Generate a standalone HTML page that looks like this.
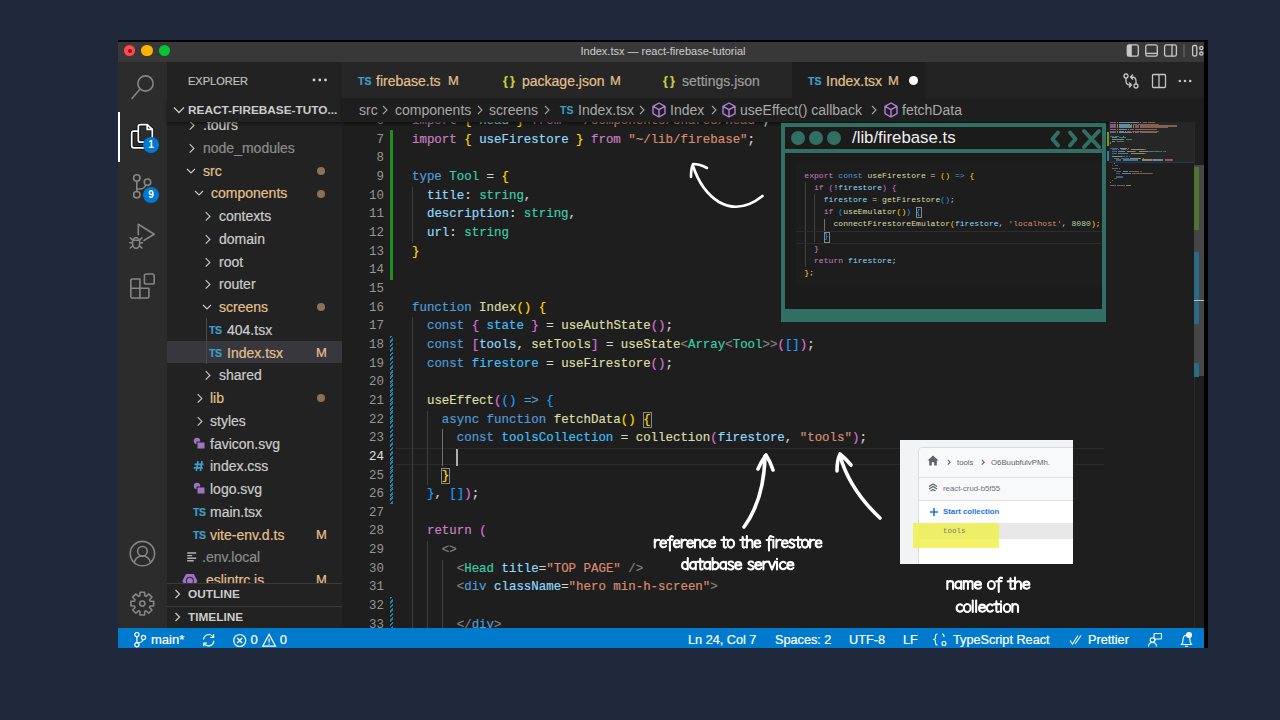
<!DOCTYPE html>
<html><head><meta charset="utf-8"><style>
*{margin:0;padding:0;box-sizing:border-box}
html,body{width:1280px;height:720px;overflow:hidden;background:#1f293b;font-family:"Liberation Sans",sans-serif}
.a{position:absolute}
.mono{font-family:"Liberation Mono",monospace}
.badge{position:absolute;width:16px;height:16px;border-radius:8px;background:#0078d4;color:#fff;font-size:10px;font-weight:bold;text-align:center;line-height:16px}
.row{position:absolute;left:167px;width:175px;height:22.75px;line-height:22.75px;font-size:14px;color:#cccccc;white-space:nowrap;-webkit-text-stroke:0.2px currentColor}
.row .t{position:absolute;top:0}
.chev{position:absolute;top:0}
.mod{color:#e2c08d}
.ign{color:#8c8c8c}
.dot{position:absolute;left:150px;top:7.4px;width:8px;height:8px;border-radius:4px;background:#8d7058}
.M{position:absolute;left:149px;top:0;color:#e2c08d;font-size:13px}
.ts{position:absolute;top:0;color:#3d9fc9;font-size:10px;font-weight:bold;letter-spacing:-0.3px}
.tab{position:absolute;top:62px;height:36px;line-height:38.5px;font-size:14px;white-space:nowrap;background:#262626;-webkit-text-stroke:0.2px currentColor}
.code{position:absolute;left:412px;font-family:"Liberation Mono",monospace;font-size:12.43px;line-height:18.65px;white-space:pre;color:#d4d4d4;-webkit-text-stroke:0.2px currentColor}
.ln{position:absolute;left:344px;width:40px;text-align:right;font-family:"Liberation Mono",monospace;font-size:12.43px;line-height:18.65px;color:#858585}
.k{color:#c97fc2}.s{color:#4f9bd8}.v{color:#8ed8fb}.c{color:#3fbff8}.f{color:#dcdca6}.t2{color:#3acca8}.str{color:#d88b6e}.p{color:#d4d4d4}.g{color:#808080}
.b1{color:#ffd700}.b2{color:#da70d6}.b3{color:#179fff}
.sb{position:absolute;top:628px;height:20px;line-height:20px;font-size:13px;color:#fff;white-space:nowrap;-webkit-text-stroke:0.2px #fff}
.hand{position:absolute;color:#fff;font-size:15.3px;white-space:nowrap;text-align:center;-webkit-text-stroke:0.45px #fff}
.n{color:#b5cea8}</style></head><body>
<div class="a" style="left:118px;top:40px;width:1090px;height:608px;background:#000"></div>
<div class="a" style="left:118px;top:42px;width:1086px;height:20px;background:#383838"></div>
<div class="a" style="left:124.05px;top:44.95px;width:11.3px;height:11.3px;border-radius:50%;background:#ff4b50"></div>
<div class="a" style="left:127.6px;top:48.5px;width:4.2px;height:4.2px;border-radius:50%;background:#9a0d10"></div>
<div class="a" style="left:141.25px;top:44.95px;width:11.3px;height:11.3px;border-radius:50%;background:#ffb202"></div>
<div class="a" style="left:158.55px;top:44.95px;width:11.3px;height:11.3px;border-radius:50%;background:#05c534"></div>
<div class="a" style="left:560px;top:43px;width:206px;text-align:center;font-size:11px;line-height:16px;color:#cfcfcf">Index.tsx — react-firebase-tutorial</div>
<svg class="a" style="left:1120px;top:42px" width="84" height="20" viewBox="0 0 84 20" fill="none" stroke="#c8c8c8" stroke-width="1.3">
<rect x="7.3" y="2.9" width="11" height="11.3" rx="1.8"/><rect x="7.3" y="2.9" width="4.5" height="11.3" fill="#c8c8c8" stroke="none"/>
<rect x="25.8" y="2.9" width="11.5" height="11.3" rx="1.8"/><line x1="25.8" y1="11.4" x2="37.3" y2="11.4"/>
<rect x="44.6" y="2.9" width="11.8" height="11.3" rx="1.8"/><line x1="52" y1="2.9" x2="52" y2="14.2"/>
<line x1="64" y1="2.5" x2="64" y2="15" stroke="#666"/>
<rect x="72.6" y="3.5" width="4.2" height="10.5" rx="1.5"/><circle cx="81.3" cy="6" r="1.6"/><circle cx="81.3" cy="11.6" r="1.6"/>
</svg>
<div class="a" style="left:118px;top:62px;width:49px;height:566px;background:#2c2c2c"></div>
<div class="a" style="left:118px;top:112px;width:2px;height:50px;background:#fff"></div>
<svg class="a" style="left:118px;top:62px" width="49" height="566" viewBox="0 0 49 566" fill="none" stroke="#858585" stroke-width="1.6" stroke-linecap="round" stroke-linejoin="round">
<circle cx="27.5" cy="21.5" r="7.6"/><line x1="22" y1="27" x2="14" y2="36.5"/>
<g stroke="#000" stroke-width="3.6" opacity="0.6">
<path d="M22.3 62.7 h7 l5 4.7 v10.8 a2 2 0 0 1 -2 2 h-10 a2 2 0 0 1 -2 -2 v-13.5 a2 2 0 0 1 2 -2z"/>
<path d="M20.3 69.1 h-4.6 a2 2 0 0 0 -2 2 v12.7 a2 2 0 0 0 2 2 h12 a2 2 0 0 0 2 -2 v-3.6"/>
</g>
<g stroke="#fff" stroke-width="1.7">
<path d="M22.3 62.7 h7 l5 4.7 v10.8 a2 2 0 0 1 -2 2 h-10 a2 2 0 0 1 -2 -2 v-13.5 a2 2 0 0 1 2 -2z"/>
<path d="M29.2 62.7 v4.7 h5"/>
<path d="M20.3 69.1 h-4.6 a2 2 0 0 0 -2 2 v12.7 a2 2 0 0 0 2 2 h12 a2 2 0 0 0 2 -2 v-3.6"/>
</g>
<circle cx="18.8" cy="116" r="3.2"/><circle cx="18.8" cy="132.7" r="3.2"/><circle cx="29.5" cy="120.2" r="3.2"/>
<line x1="18.8" y1="119.2" x2="18.8" y2="129.5"/><path d="M28 123 q-2 4 -6 4 h-3.2"/>
<path d="M20.3 172.7 V162.2 L36.2 172.2 L25.9 178.5"/>
<ellipse cx="18.1" cy="181" rx="3.6" ry="5.4"/>
<line x1="14.5" y1="178.3" x2="21.7" y2="178.3"/>
<path d="M12.3 175.8 l2.4 2.2 M23.9 175.8 l-2.4 2.2 M11.8 180.8 h2.6 M24.4 180.8 h-2.6 M12.3 186 l2.4 -2.2 M23.9 186 l-2.4 -2.2"/>
<path d="M14.3 217 h7.6 v9.2 h9 v8.3 a1.5 1.5 0 0 1 -1.5 1.5 h-15.1 a1.5 1.5 0 0 1 -1.5 -1.5 v-16 a1.5 1.5 0 0 1 1.5 -1.5z"/><path d="M12.8 226.2 h9.1 M21.9 226.2 v9.8"/>
<rect x="26.4" y="212" width="9.8" height="10" rx="1.8"/>
<circle cx="24.4" cy="491.6" r="12.2"/><circle cx="24.4" cy="489.3" r="4.8"/><path d="M16.2 500.5 q2 -6.5 8.2 -6.5 q6.2 0 8.2 6.5"/>
<circle cx="24.3" cy="541.6" r="2.6"/>
<path d="M21.88 533.77 L22.00 530.23 L26.60 530.23 L26.72 533.77 L28.13 534.35 L30.71 531.93 L33.97 535.19 L31.55 537.77 L32.13 539.18 L35.67 539.30 L35.67 543.90 L32.13 544.02 L31.55 545.43 L33.97 548.01 L30.71 551.27 L28.13 548.85 L26.72 549.43 L26.60 552.97 L22.00 552.97 L21.88 549.43 L20.47 548.85 L17.89 551.27 L14.63 548.01 L17.05 545.43 L16.47 544.02 L12.93 543.90 L12.93 539.30 L16.47 539.18 L17.05 537.77 L14.63 535.19 L17.89 531.93 L20.47 534.35z"/>
</svg>
<div class="badge" style="left:143px;top:137px">1</div>
<div class="badge" style="left:143px;top:187px">9</div>
<div class="a" style="left:167px;top:62px;width:175px;height:566px;background:#222222"></div>
<div class="a" style="left:188px;top:73px;font-size:11px;line-height:16px;color:#c0c0c0;-webkit-text-stroke:0.2px #c0c0c0">EXPLORER</div>
<svg class="a" style="left:308px;top:74px" width="24" height="12" viewBox="0 0 24 12"><circle cx="6" cy="6" r="1.4" fill="#d0d0d0"/><circle cx="11.8" cy="6" r="1.4" fill="#d0d0d0"/><circle cx="17.5" cy="6" r="1.4" fill="#d0d0d0"/></svg>
<div class="a" style="left:167px;top:340.6px;width:175px;height:22.75px;background:#37373d"></div>
<div class="a" style="left:206px;top:318px;width:1px;height:45.5px;background:#4a4a4a"></div>
<div class="row " style="top:114.10px"><svg class="chev" style="left:20px" width="10" height="22" viewBox="0 0 10 22"><path d="M2.7 7.2 l4.2 4.2 l-4.2 4.2" fill="none" stroke="#c5c5c5" stroke-width="1.2"/></svg><span class="t" style="left:36px">.tours</span></div>
<div class="row ign" style="top:136.85px"><svg class="chev" style="left:20px" width="10" height="22" viewBox="0 0 10 22"><path d="M2.7 7.2 l4.2 4.2 l-4.2 4.2" fill="none" stroke="#c5c5c5" stroke-width="1.2"/></svg><span class="t" style="left:36px">node_modules</span></div>
<div class="row mod" style="top:159.60px"><svg class="chev" style="left:18px" width="12" height="22" viewBox="0 0 12 22"><path d="M2 9 l4 4 l4 -4" fill="none" stroke="#c5c5c5" stroke-width="1.2"/></svg><span class="t" style="left:36px">src</span><span class="dot"></span></div>
<div class="row mod" style="top:182.35px"><svg class="chev" style="left:26px" width="12" height="22" viewBox="0 0 12 22"><path d="M2 9 l4 4 l4 -4" fill="none" stroke="#c5c5c5" stroke-width="1.2"/></svg><span class="t" style="left:44px">components</span><span class="dot"></span></div>
<div class="row " style="top:205.10px"><svg class="chev" style="left:36px" width="10" height="22" viewBox="0 0 10 22"><path d="M2.7 7.2 l4.2 4.2 l-4.2 4.2" fill="none" stroke="#c5c5c5" stroke-width="1.2"/></svg><span class="t" style="left:52px">contexts</span></div>
<div class="row " style="top:227.85px"><svg class="chev" style="left:36px" width="10" height="22" viewBox="0 0 10 22"><path d="M2.7 7.2 l4.2 4.2 l-4.2 4.2" fill="none" stroke="#c5c5c5" stroke-width="1.2"/></svg><span class="t" style="left:52px">domain</span></div>
<div class="row " style="top:250.60px"><svg class="chev" style="left:36px" width="10" height="22" viewBox="0 0 10 22"><path d="M2.7 7.2 l4.2 4.2 l-4.2 4.2" fill="none" stroke="#c5c5c5" stroke-width="1.2"/></svg><span class="t" style="left:52px">root</span></div>
<div class="row " style="top:273.35px"><svg class="chev" style="left:36px" width="10" height="22" viewBox="0 0 10 22"><path d="M2.7 7.2 l4.2 4.2 l-4.2 4.2" fill="none" stroke="#c5c5c5" stroke-width="1.2"/></svg><span class="t" style="left:52px">router</span></div>
<div class="row mod" style="top:296.10px"><svg class="chev" style="left:34px" width="12" height="22" viewBox="0 0 12 22"><path d="M2 9 l4 4 l4 -4" fill="none" stroke="#c5c5c5" stroke-width="1.2"/></svg><span class="t" style="left:52px">screens</span><span class="dot"></span></div>
<div class="row " style="top:318.85px"><span class="ts" style="left:42px;font-size:10.5px">TS</span><span class="t" style="left:60px">404.tsx</span></div>
<div class="row mod" style="top:341.60px"><span class="ts" style="left:42px;font-size:10.5px">TS</span><span class="t" style="left:60px">Index.tsx</span><span class="M">M</span></div>
<div class="row " style="top:364.35px"><svg class="chev" style="left:36px" width="10" height="22" viewBox="0 0 10 22"><path d="M2.7 7.2 l4.2 4.2 l-4.2 4.2" fill="none" stroke="#c5c5c5" stroke-width="1.2"/></svg><span class="t" style="left:52px">shared</span></div>
<div class="row mod" style="top:387.10px"><svg class="chev" style="left:28px" width="10" height="22" viewBox="0 0 10 22"><path d="M2.7 7.2 l4.2 4.2 l-4.2 4.2" fill="none" stroke="#c5c5c5" stroke-width="1.2"/></svg><span class="t" style="left:43px">lib</span><span class="dot"></span></div>
<div class="row " style="top:409.85px"><svg class="chev" style="left:28px" width="10" height="22" viewBox="0 0 10 22"><path d="M2.7 7.2 l4.2 4.2 l-4.2 4.2" fill="none" stroke="#c5c5c5" stroke-width="1.2"/></svg><span class="t" style="left:43px">styles</span></div>
<div class="row " style="top:432.60px"><svg class="chev" style="left:25px" width="16" height="22" viewBox="0 0 16 22"><circle cx="5" cy="8" r="3.2" fill="#a074c4"/><rect x="5" y="9" width="8" height="7" fill="#a074c4" stroke="#222" stroke-width="1"/></svg><span class="t" style="left:43px">favicon.svg</span></div>
<div class="row " style="top:455.35px"><svg class="chev" style="left:26px" width="12" height="22" viewBox="0 0 12 22"><path d="M5 6 l-1.6 10 M9 6 l-1.6 10 M1.5 9.3 h9 M0.8 12.8 h9" fill="none" stroke="#3d9fc9" stroke-width="1.7"/></svg><span class="t" style="left:43px">index.css</span></div>
<div class="row " style="top:478.10px"><svg class="chev" style="left:25px" width="16" height="22" viewBox="0 0 16 22"><circle cx="5" cy="8" r="3.2" fill="#a074c4"/><rect x="5" y="9" width="8" height="7" fill="#a074c4" stroke="#222" stroke-width="1"/></svg><span class="t" style="left:43px">logo.svg</span></div>
<div class="row " style="top:500.85px"><span class="ts" style="left:26px;font-size:10.5px">TS</span><span class="t" style="left:43px">main.tsx</span></div>
<div class="row mod" style="top:523.60px"><span class="ts" style="left:26px;font-size:10.5px">TS</span><span class="t" style="left:43px">vite-env.d.ts</span><span class="M">M</span></div>
<div class="row ign" style="top:546.35px"><svg class="chev" style="left:20px" width="12" height="22" viewBox="0 0 12 22"><path d="M0.2 7h9M0.2 9.6h5M0.2 12.2h9M0.2 14.8h6.5" stroke="#b0b0b0" stroke-width="1.4"/></svg><span class="t" style="left:35px">.env.local</span></div>
<div class="row mod" style="top:569.10px"><svg class="chev" style="left:15px" width="16" height="22" viewBox="0 0 16 22"><path d="M4 5 h7.8 l3.6 6.9 l-3.6 6.9 h-7.8 l-3.6 -6.9z" fill="#a074c4"/><circle cx="7.9" cy="11.9" r="3.5" fill="none" stroke="#3a2a4a" stroke-width="1.1"/><circle cx="7.9" cy="11.9" r="2.3" fill="#a074c4"/></svg><span class="t" style="left:35px">.eslintrc.js</span><span class="M">M</span></div>
<div class="a" style="left:167px;top:98px;width:175px;height:24px;background:#222222;box-shadow:0 2px 3px rgba(0,0,0,0.45)"></div>
<svg class="a" style="left:172px;top:98px" width="14" height="24" viewBox="0 0 14 24"><path d="M2 9.5 l5 5 l5 -5" fill="none" stroke="#c5c5c5" stroke-width="1.3"/></svg>
<div class="a" style="left:188px;top:102px;font-size:11.8px;line-height:16px;font-weight:bold;color:#cccccc">REACT-FIREBASE-TUTO...</div>
<div class="a" style="left:167px;top:583px;width:175px;height:23px;background:#222222;border-top:1px solid #3a3a3a"></div>
<svg class="a" style="left:172px;top:583px" width="12" height="22" viewBox="0 0 12 22"><path d="M3.5 7 l4 4 l-4 4" fill="none" stroke="#c5c5c5" stroke-width="1.3"/></svg>
<div class="a" style="left:188px;top:586px;font-size:11.8px;line-height:16px;font-weight:bold;color:#cccccc">OUTLINE</div>
<div class="a" style="left:167px;top:606px;width:175px;height:22px;background:#222222;border-top:1px solid #3a3a3a"></div>
<svg class="a" style="left:172px;top:606px" width="12" height="22" viewBox="0 0 12 22"><path d="M3.5 7 l4 4 l-4 4" fill="none" stroke="#c5c5c5" stroke-width="1.3"/></svg>
<div class="a" style="left:188px;top:609px;font-size:11.8px;line-height:16px;font-weight:bold;color:#cccccc">TIMELINE</div>
<div class="a" style="left:342px;top:98px;width:862px;height:530px;background:#1e1e1e"></div>
<div class="a" style="left:396px;top:448px;width:708px;height:17px;border-top:1px solid #2c2c2c;border-bottom:1px solid #2c2c2c"></div>
<div class="a" style="left:412px;top:186.75px;width:1px;height:55.95px;background:#404040"></div>
<div class="a" style="left:412px;top:317.30px;width:1px;height:317.05px;background:#404040"></div>
<div class="a" style="left:427px;top:410.55px;width:1px;height:74.60px;background:#404040"></div>
<div class="a" style="left:427px;top:541.10px;width:1px;height:93.25px;background:#404040"></div>
<div class="a" style="left:442px;top:429.20px;width:1px;height:37.30px;background:#707070"></div>
<div class="a" style="left:442px;top:559.75px;width:1px;height:74.60px;background:#404040"></div>
<div class="ln" style="top:112.15px;color:#969696">6</div>
<div class="code" style="top:112.15px"><span class="k">import</span><span class="p"> </span><span class="b1">{</span><span class="p"> </span><span class="v">Head</span><span class="p"> </span><span class="b1">}</span><span class="p"> </span><span class="k">from</span><span class="p"> </span><span class="str">&quot;~/components/shared/Head&quot;</span><span class="p">;</span></div>
<div class="ln" style="top:130.80px;color:#969696">7</div>
<div class="code" style="top:130.80px"><span class="k">import</span><span class="p"> </span><span class="b1">{</span><span class="p"> </span><span class="v">useFirestore</span><span class="p"> </span><span class="b1">}</span><span class="p"> </span><span class="k">from</span><span class="p"> </span><span class="str">&quot;~/lib/firebase&quot;</span><span class="p">;</span></div>
<div class="ln" style="top:149.45px;color:#969696">8</div>
<div class="ln" style="top:168.10px;color:#969696">9</div>
<div class="code" style="top:168.10px"><span class="s">type</span><span class="p"> </span><span class="t2">Tool</span><span class="p"> = </span><span class="b1">{</span></div>
<div class="ln" style="top:186.75px;color:#969696">10</div>
<div class="code" style="top:186.75px"><span class="p">  </span><span class="v">title</span><span class="p">: </span><span class="t2">string</span><span class="p">,</span></div>
<div class="ln" style="top:205.40px;color:#969696">11</div>
<div class="code" style="top:205.40px"><span class="p">  </span><span class="v">description</span><span class="p">: </span><span class="t2">string</span><span class="p">,</span></div>
<div class="ln" style="top:224.05px;color:#969696">12</div>
<div class="code" style="top:224.05px"><span class="p">  </span><span class="v">url</span><span class="p">: </span><span class="t2">string</span></div>
<div class="ln" style="top:242.70px;color:#969696">13</div>
<div class="code" style="top:242.70px"><span class="b1">}</span></div>
<div class="ln" style="top:261.35px;color:#969696">14</div>
<div class="ln" style="top:280.00px;color:#969696">15</div>
<div class="ln" style="top:298.65px;color:#969696">16</div>
<div class="code" style="top:298.65px"><span class="s">function</span><span class="p"> </span><span class="f">Index</span><span class="b1">()</span><span class="p"> </span><span class="b1">{</span></div>
<div class="ln" style="top:317.30px;color:#969696">17</div>
<div class="code" style="top:317.30px"><span class="p">  </span><span class="s">const</span><span class="p"> </span><span class="b2">{</span><span class="p"> </span><span class="c">state</span><span class="p"> </span><span class="b2">}</span><span class="p"> = </span><span class="f">useAuthState</span><span class="b2">()</span><span class="p">;</span></div>
<div class="ln" style="top:335.95px;color:#969696">18</div>
<div class="code" style="top:335.95px"><span class="p">  </span><span class="s">const</span><span class="p"> </span><span class="b2">[</span><span class="v">tools</span><span class="p">, </span><span class="f">setTools</span><span class="b2">]</span><span class="p"> = </span><span class="f">useState</span><span class="g">&lt;</span><span class="t2">Array</span><span class="g">&lt;</span><span class="t2">Tool</span><span class="g">&gt;&gt;</span><span class="b2">(</span><span class="b3">[]</span><span class="b2">)</span><span class="p">;</span></div>
<div class="ln" style="top:354.60px;color:#969696">19</div>
<div class="code" style="top:354.60px"><span class="p">  </span><span class="s">const</span><span class="p"> </span><span class="c">firestore</span><span class="p"> = </span><span class="f">useFirestore</span><span class="b2">()</span><span class="p">;</span></div>
<div class="ln" style="top:373.25px;color:#969696">20</div>
<div class="ln" style="top:391.90px;color:#969696">21</div>
<div class="code" style="top:391.90px"><span class="p">  </span><span class="f">useEffect</span><span class="b2">(</span><span class="b3">()</span><span class="p"> </span><span class="s">=&gt;</span><span class="p"> </span><span class="b3">{</span></div>
<div class="ln" style="top:410.55px;color:#969696">22</div>
<div class="code" style="top:410.55px"><span class="p">    </span><span class="s">async</span><span class="p"> </span><span class="s">function</span><span class="p"> </span><span class="f">fetchData</span><span class="b1">()</span><span class="p"> </span><span class="b1">{</span></div>
<div class="ln" style="top:429.20px;color:#969696">23</div>
<div class="code" style="top:429.20px"><span class="p">      </span><span class="s">const</span><span class="p"> </span><span class="c">toolsCollection</span><span class="p"> = </span><span class="f">collection</span><span class="b2">(</span><span class="v">firestore</span><span class="p">, </span><span class="str">&quot;tools&quot;</span><span class="b2">)</span><span class="p">;</span></div>
<div class="ln" style="top:447.85px;color:#e0e0e0">24</div>
<div class="ln" style="top:466.50px;color:#969696">25</div>
<div class="code" style="top:466.50px"><span class="p">    </span><span class="b1">}</span></div>
<div class="ln" style="top:485.15px;color:#969696">26</div>
<div class="code" style="top:485.15px"><span class="p">  </span><span class="b3">}</span><span class="p">, </span><span class="b3">[]</span><span class="b2">)</span><span class="p">;</span></div>
<div class="ln" style="top:503.80px;color:#969696">27</div>
<div class="ln" style="top:522.45px;color:#969696">28</div>
<div class="code" style="top:522.45px"><span class="p">  </span><span class="k">return</span><span class="p"> </span><span class="b2">(</span></div>
<div class="ln" style="top:541.10px;color:#969696">29</div>
<div class="code" style="top:541.10px"><span class="p">    </span><span class="g">&lt;&gt;</span></div>
<div class="ln" style="top:559.75px;color:#969696">30</div>
<div class="code" style="top:559.75px"><span class="p">      </span><span class="g">&lt;</span><span class="t2">Head</span><span class="p"> </span><span class="v">title</span><span class="p">=</span><span class="str">&quot;TOP PAGE&quot;</span><span class="p"> </span><span class="g">/&gt;</span></div>
<div class="ln" style="top:578.40px;color:#969696">31</div>
<div class="code" style="top:578.40px"><span class="p">      </span><span class="g">&lt;</span><span class="s">div</span><span class="p"> </span><span class="v">className</span><span class="p">=</span><span class="str">&quot;hero min-h-screen&quot;</span><span class="g">&gt;</span></div>
<div class="ln" style="top:597.05px;color:#969696">32</div>
<div class="ln" style="top:615.70px;color:#969696">33</div>
<div class="code" style="top:615.70px"><span class="p">      </span><span class="g">&lt;/</span><span class="s">div</span><span class="g">&gt;</span></div>
<div class="a" style="left:642.7px;top:412.1px;width:9px;height:16px;border:1px solid #888"></div>
<div class="a" style="left:441.3px;top:468.0px;width:9px;height:16px;border:1px solid #888"></div>
<div class="a" style="left:456px;top:448.8px;width:2px;height:17px;background:#aeafad"></div>
<div class="a" style="left:390px;top:129.5px;width:3px;height:150.20px;background:#1e8e1e"></div>
<div class="a" style="left:390px;top:335.95px;width:3px;height:167.85px;background:repeating-linear-gradient(135deg,#1b81a8 0 2px,#1e1e1e 2px 3.2px)"></div>
<div class="a" style="left:390px;top:597.05px;width:3px;height:37.30px;background:repeating-linear-gradient(135deg,#1b81a8 0 2px,#1e1e1e 2px 3.2px)"></div>
<div class="a" style="left:342px;top:98px;width:862px;height:24px;background:#1e1e1e;box-shadow:0 2px 3px rgba(0,0,0,0.5)"></div>
<div class="a" style="left:359px;top:101px;font-size:14px;line-height:18px;color:#a9a9a9;white-space:nowrap">src</div>
<svg class="a" style="left:380px;top:101px" width="10" height="18" viewBox="0 0 10 18"><path d="M3 5 l4 4 l-4 4" fill="none" stroke="#a0a0a0" stroke-width="1.1"/></svg>
<div class="a" style="left:395px;top:101px;font-size:14px;line-height:18px;color:#a9a9a9;white-space:nowrap">components</div>
<svg class="a" style="left:475px;top:101px" width="10" height="18" viewBox="0 0 10 18"><path d="M3 5 l4 4 l-4 4" fill="none" stroke="#a0a0a0" stroke-width="1.1"/></svg>
<div class="a" style="left:489px;top:101px;font-size:14px;line-height:18px;color:#a9a9a9;white-space:nowrap">screens</div>
<svg class="a" style="left:542px;top:101px" width="10" height="18" viewBox="0 0 10 18"><path d="M3 5 l4 4 l-4 4" fill="none" stroke="#a0a0a0" stroke-width="1.1"/></svg>
<div class="a" style="left:560px;top:101px;font-size:10.5px;line-height:18px;color:#3d9fc9;font-weight:bold">TS</div>
<div class="a" style="left:578px;top:101px;font-size:14px;line-height:18px;color:#a9a9a9;white-space:nowrap">Index.tsx</div>
<svg class="a" style="left:637px;top:101px" width="10" height="18" viewBox="0 0 10 18"><path d="M3 5 l4 4 l-4 4" fill="none" stroke="#a0a0a0" stroke-width="1.1"/></svg>
<svg class="a" style="left:651px;top:101px" width="16" height="18" viewBox="0 0 16 18"><path d="M8 2 l6 3.3 v7.4 l-6 3.3 l-6 -3.3 v-7.4z M2 5.3 l6 3.4 l6 -3.4 M8 8.7 v7.3" fill="none" stroke="#b180d7" stroke-width="1.4" stroke-linejoin="round"/></svg>
<div class="a" style="left:670px;top:101px;font-size:14px;line-height:18px;color:#a9a9a9;white-space:nowrap">Index</div>
<svg class="a" style="left:709px;top:101px" width="10" height="18" viewBox="0 0 10 18"><path d="M3 5 l4 4 l-4 4" fill="none" stroke="#a0a0a0" stroke-width="1.1"/></svg>
<svg class="a" style="left:721px;top:101px" width="16" height="18" viewBox="0 0 16 18"><path d="M8 2 l6 3.3 v7.4 l-6 3.3 l-6 -3.3 v-7.4z M2 5.3 l6 3.4 l6 -3.4 M8 8.7 v7.3" fill="none" stroke="#b180d7" stroke-width="1.4" stroke-linejoin="round"/></svg>
<div class="a" style="left:740px;top:101px;font-size:14px;line-height:18px;color:#a9a9a9;white-space:nowrap">useEffect() callback</div>
<svg class="a" style="left:869px;top:101px" width="10" height="18" viewBox="0 0 10 18"><path d="M3 5 l4 4 l-4 4" fill="none" stroke="#a0a0a0" stroke-width="1.1"/></svg>
<svg class="a" style="left:883px;top:101px" width="16" height="18" viewBox="0 0 16 18"><path d="M8 2 l6 3.3 v7.4 l-6 3.3 l-6 -3.3 v-7.4z M2 5.3 l6 3.4 l6 -3.4 M8 8.7 v7.3" fill="none" stroke="#b180d7" stroke-width="1.4" stroke-linejoin="round"/></svg>
<div class="a" style="left:902px;top:101px;font-size:14px;line-height:18px;color:#a9a9a9;white-space:nowrap">fetchData</div>
<div class="a" style="left:342px;top:62px;width:862px;height:36px;background:#232323"></div>
<div class="tab" style="left:342px;width:147px;background:#262626"><span class="a" style="left:16px;top:0;color:#3d9fc9;font-size:10.5px;font-weight:bold">TS</span><span class="a" style="left:34px;top:0;color:#e2c08d">firebase.ts</span><span class="a" style="left:106px;top:0;color:#e2c08d;font-size:13px">M</span></div>
<div class="tab" style="left:489px;width:160px;background:#262626"><span class="a" style="left:14px;top:-0.5px;color:#cbcb41;font-size:12.5px;font-weight:bold">{</span><span class="a" style="left:21px;top:-0.5px;color:#cbcb41;font-size:12.5px;font-weight:bold">}</span><span class="a" style="left:33px;top:0;color:#e2c08d">package.json</span><span class="a" style="left:121px;top:0;color:#e2c08d;font-size:13px">M</span></div>
<div class="tab" style="left:649px;width:143px;background:#262626"><span class="a" style="left:14px;top:-0.5px;color:#cbcb41;font-size:12.5px;font-weight:bold">{</span><span class="a" style="left:21px;top:-0.5px;color:#cbcb41;font-size:12.5px;font-weight:bold">}</span><span class="a" style="left:33px;top:0;color:#9d9d9d">settings.json</span></div>
<div class="tab" style="left:792px;width:134px;background:#1e1e1e"><span class="a" style="left:16px;top:0;color:#3d9fc9;font-size:10.5px;font-weight:bold">TS</span><span class="a" style="left:34px;top:0;color:#e2c08d">Index.tsx</span><span class="a" style="left:96px;top:0;color:#e2c08d;font-size:13px">M</span><span class="a" style="left:116.5px;top:13.5px;width:9px;height:9px;border-radius:5px;background:#fff"></span></div>
<svg class="a" style="left:1120px;top:69.3px" width="80" height="24" viewBox="0 0 80 24" fill="none" stroke="#c5c5c5" stroke-width="1.3">
<circle cx="6" cy="7" r="2"/><circle cx="16" cy="17" r="2"/>
<path d="M6 9 v3 q0 4 4 4 h1 M9 13.5 l2.5 2.5 l-2.5 2.5"/>
<path d="M16 15 v-3 q0 -4 -4 -4 h-1 M13 10.5 l-2.5 -2.5 l2.5 -2.5"/>
<rect x="32.5" y="5.5" width="13" height="13" rx="1"/><line x1="39" y1="5.5" x2="39" y2="18.5"/>
<circle cx="59.8" cy="12" r="1.3" fill="#c5c5c5" stroke="none"/><circle cx="65" cy="12" r="1.3" fill="#c5c5c5" stroke="none"/><circle cx="70.2" cy="12" r="1.3" fill="#c5c5c5" stroke="none"/>
</svg>
<div class="a" style="left:1109px;top:122px;width:85px;height:40px;background:#262626"></div>
<div class="a" style="left:1110.0px;top:122.0px;width:6.3px;height:1.2px;background:#c586c0;opacity:.55"></div>
<div class="a" style="left:1117.3px;top:122.0px;width:1.1px;height:1.2px;background:#ffd700;opacity:.55"></div>
<div class="a" style="left:1119.4px;top:122.0px;width:19.9px;height:1.2px;background:#9cdcfe;opacity:.55"></div>
<div class="a" style="left:1140.4px;top:122.0px;width:1.1px;height:1.2px;background:#ffd700;opacity:.55"></div>
<div class="a" style="left:1142.5px;top:122.0px;width:4.2px;height:1.2px;background:#c586c0;opacity:.55"></div>
<div class="a" style="left:1147.8px;top:122.0px;width:7.4px;height:1.2px;background:#ce9178;opacity:.55"></div>
<div class="a" style="left:1110.0px;top:123.7px;width:6.3px;height:1.2px;background:#c586c0;opacity:.55"></div>
<div class="a" style="left:1117.3px;top:123.7px;width:1.1px;height:1.2px;background:#ffd700;opacity:.55"></div>
<div class="a" style="left:1119.4px;top:123.7px;width:10.5px;height:1.2px;background:#9cdcfe;opacity:.55"></div>
<div class="a" style="left:1131.0px;top:123.7px;width:1.1px;height:1.2px;background:#ffd700;opacity:.55"></div>
<div class="a" style="left:1133.1px;top:123.7px;width:4.2px;height:1.2px;background:#c586c0;opacity:.55"></div>
<div class="a" style="left:1138.3px;top:123.7px;width:21.0px;height:1.2px;background:#ce9178;opacity:.55"></div>
<div class="a" style="left:1110.0px;top:125.4px;width:6.3px;height:1.2px;background:#c586c0;opacity:.55"></div>
<div class="a" style="left:1117.3px;top:125.4px;width:1.1px;height:1.2px;background:#ffd700;opacity:.55"></div>
<div class="a" style="left:1119.4px;top:125.4px;width:12.6px;height:1.2px;background:#9cdcfe;opacity:.55"></div>
<div class="a" style="left:1133.1px;top:125.4px;width:1.1px;height:1.2px;background:#ffd700;opacity:.55"></div>
<div class="a" style="left:1135.2px;top:125.4px;width:4.2px;height:1.2px;background:#c586c0;opacity:.55"></div>
<div class="a" style="left:1140.4px;top:125.4px;width:36.8px;height:1.2px;background:#ce9178;opacity:.55"></div>
<div class="a" style="left:1110.0px;top:127.1px;width:6.3px;height:1.2px;background:#c586c0;opacity:.55"></div>
<div class="a" style="left:1117.3px;top:127.1px;width:1.1px;height:1.2px;background:#ffd700;opacity:.55"></div>
<div class="a" style="left:1119.4px;top:127.1px;width:12.6px;height:1.2px;background:#9cdcfe;opacity:.55"></div>
<div class="a" style="left:1133.1px;top:127.1px;width:1.1px;height:1.2px;background:#ffd700;opacity:.55"></div>
<div class="a" style="left:1135.2px;top:127.1px;width:4.2px;height:1.2px;background:#c586c0;opacity:.55"></div>
<div class="a" style="left:1140.4px;top:127.1px;width:27.3px;height:1.2px;background:#ce9178;opacity:.55"></div>
<div class="a" style="left:1110.0px;top:128.8px;width:6.3px;height:1.2px;background:#c586c0;opacity:.55"></div>
<div class="a" style="left:1117.3px;top:128.8px;width:1.1px;height:1.2px;background:#ffd700;opacity:.55"></div>
<div class="a" style="left:1119.4px;top:128.8px;width:7.4px;height:1.2px;background:#9cdcfe;opacity:.55"></div>
<div class="a" style="left:1127.8px;top:128.8px;width:1.1px;height:1.2px;background:#ffd700;opacity:.55"></div>
<div class="a" style="left:1129.9px;top:128.8px;width:4.2px;height:1.2px;background:#c586c0;opacity:.55"></div>
<div class="a" style="left:1135.2px;top:128.8px;width:22.1px;height:1.2px;background:#ce9178;opacity:.55"></div>
<div class="a" style="left:1110.0px;top:130.5px;width:6.3px;height:1.2px;background:#c586c0;opacity:.55"></div>
<div class="a" style="left:1117.3px;top:130.5px;width:1.1px;height:1.2px;background:#ffd700;opacity:.55"></div>
<div class="a" style="left:1119.4px;top:130.5px;width:4.2px;height:1.2px;background:#9cdcfe;opacity:.55"></div>
<div class="a" style="left:1124.7px;top:130.5px;width:1.1px;height:1.2px;background:#ffd700;opacity:.55"></div>
<div class="a" style="left:1126.8px;top:130.5px;width:4.2px;height:1.2px;background:#c586c0;opacity:.55"></div>
<div class="a" style="left:1132.0px;top:130.5px;width:27.3px;height:1.2px;background:#ce9178;opacity:.55"></div>
<div class="a" style="left:1110.0px;top:132.2px;width:6.3px;height:1.2px;background:#c586c0;opacity:.55"></div>
<div class="a" style="left:1117.3px;top:132.2px;width:1.1px;height:1.2px;background:#ffd700;opacity:.55"></div>
<div class="a" style="left:1119.4px;top:132.2px;width:12.6px;height:1.2px;background:#9cdcfe;opacity:.55"></div>
<div class="a" style="left:1133.1px;top:132.2px;width:1.1px;height:1.2px;background:#ffd700;opacity:.55"></div>
<div class="a" style="left:1135.2px;top:132.2px;width:4.2px;height:1.2px;background:#c586c0;opacity:.55"></div>
<div class="a" style="left:1140.4px;top:132.2px;width:16.8px;height:1.2px;background:#ce9178;opacity:.55"></div>
<div class="a" style="left:1110.0px;top:135.6px;width:4.2px;height:1.2px;background:#569cd6;opacity:.55"></div>
<div class="a" style="left:1115.2px;top:135.6px;width:4.2px;height:1.2px;background:#4ec9b0;opacity:.55"></div>
<div class="a" style="left:1122.6px;top:135.6px;width:1.1px;height:1.2px;background:#ffd700;opacity:.55"></div>
<div class="a" style="left:1112.1px;top:137.3px;width:5.2px;height:1.2px;background:#9cdcfe;opacity:.55"></div>
<div class="a" style="left:1119.4px;top:137.3px;width:6.3px;height:1.2px;background:#4ec9b0;opacity:.55"></div>
<div class="a" style="left:1112.1px;top:139.0px;width:11.6px;height:1.2px;background:#9cdcfe;opacity:.55"></div>
<div class="a" style="left:1125.7px;top:139.0px;width:6.3px;height:1.2px;background:#4ec9b0;opacity:.55"></div>
<div class="a" style="left:1112.1px;top:140.7px;width:3.2px;height:1.2px;background:#9cdcfe;opacity:.55"></div>
<div class="a" style="left:1117.3px;top:140.7px;width:6.3px;height:1.2px;background:#4ec9b0;opacity:.55"></div>
<div class="a" style="left:1110.0px;top:142.4px;width:1.1px;height:1.2px;background:#ffd700;opacity:.55"></div>
<div class="a" style="left:1110.0px;top:147.5px;width:8.4px;height:1.2px;background:#569cd6;opacity:.55"></div>
<div class="a" style="left:1119.5px;top:147.5px;width:5.2px;height:1.2px;background:#dcdcaa;opacity:.55"></div>
<div class="a" style="left:1124.7px;top:147.5px;width:2.1px;height:1.2px;background:#ffd700;opacity:.55"></div>
<div class="a" style="left:1127.8px;top:147.5px;width:1.1px;height:1.2px;background:#ffd700;opacity:.55"></div>
<div class="a" style="left:1112.1px;top:149.2px;width:5.2px;height:1.2px;background:#569cd6;opacity:.55"></div>
<div class="a" style="left:1118.4px;top:149.2px;width:1.1px;height:1.2px;background:#da70d6;opacity:.55"></div>
<div class="a" style="left:1120.5px;top:149.2px;width:5.2px;height:1.2px;background:#4fc1ff;opacity:.55"></div>
<div class="a" style="left:1126.8px;top:149.2px;width:1.1px;height:1.2px;background:#da70d6;opacity:.55"></div>
<div class="a" style="left:1131.0px;top:149.2px;width:12.6px;height:1.2px;background:#dcdcaa;opacity:.55"></div>
<div class="a" style="left:1143.6px;top:149.2px;width:2.1px;height:1.2px;background:#da70d6;opacity:.55"></div>
<div class="a" style="left:1112.1px;top:150.9px;width:5.2px;height:1.2px;background:#569cd6;opacity:.55"></div>
<div class="a" style="left:1118.4px;top:150.9px;width:1.1px;height:1.2px;background:#da70d6;opacity:.55"></div>
<div class="a" style="left:1119.4px;top:150.9px;width:5.2px;height:1.2px;background:#9cdcfe;opacity:.55"></div>
<div class="a" style="left:1126.8px;top:150.9px;width:8.4px;height:1.2px;background:#dcdcaa;opacity:.55"></div>
<div class="a" style="left:1135.2px;top:150.9px;width:1.1px;height:1.2px;background:#da70d6;opacity:.55"></div>
<div class="a" style="left:1139.4px;top:150.9px;width:8.4px;height:1.2px;background:#dcdcaa;opacity:.55"></div>
<div class="a" style="left:1147.8px;top:150.9px;width:1.1px;height:1.2px;background:#808080;opacity:.55"></div>
<div class="a" style="left:1148.8px;top:150.9px;width:5.2px;height:1.2px;background:#4ec9b0;opacity:.55"></div>
<div class="a" style="left:1154.1px;top:150.9px;width:1.1px;height:1.2px;background:#808080;opacity:.55"></div>
<div class="a" style="left:1155.1px;top:150.9px;width:4.2px;height:1.2px;background:#4ec9b0;opacity:.55"></div>
<div class="a" style="left:1159.3px;top:150.9px;width:2.1px;height:1.2px;background:#808080;opacity:.55"></div>
<div class="a" style="left:1161.4px;top:150.9px;width:1.1px;height:1.2px;background:#da70d6;opacity:.55"></div>
<div class="a" style="left:1162.5px;top:150.9px;width:2.1px;height:1.2px;background:#179fff;opacity:.55"></div>
<div class="a" style="left:1164.6px;top:150.9px;width:1.1px;height:1.2px;background:#da70d6;opacity:.55"></div>
<div class="a" style="left:1112.1px;top:152.6px;width:5.2px;height:1.2px;background:#569cd6;opacity:.55"></div>
<div class="a" style="left:1118.4px;top:152.6px;width:9.5px;height:1.2px;background:#4fc1ff;opacity:.55"></div>
<div class="a" style="left:1131.0px;top:152.6px;width:12.6px;height:1.2px;background:#dcdcaa;opacity:.55"></div>
<div class="a" style="left:1143.6px;top:152.6px;width:2.1px;height:1.2px;background:#da70d6;opacity:.55"></div>
<div class="a" style="left:1112.1px;top:156.0px;width:9.5px;height:1.2px;background:#dcdcaa;opacity:.55"></div>
<div class="a" style="left:1121.5px;top:156.0px;width:1.1px;height:1.2px;background:#da70d6;opacity:.55"></div>
<div class="a" style="left:1122.6px;top:156.0px;width:2.1px;height:1.2px;background:#179fff;opacity:.55"></div>
<div class="a" style="left:1125.7px;top:156.0px;width:2.1px;height:1.2px;background:#569cd6;opacity:.55"></div>
<div class="a" style="left:1128.9px;top:156.0px;width:1.1px;height:1.2px;background:#179fff;opacity:.55"></div>
<div class="a" style="left:1114.2px;top:157.7px;width:5.2px;height:1.2px;background:#569cd6;opacity:.55"></div>
<div class="a" style="left:1120.5px;top:157.7px;width:8.4px;height:1.2px;background:#569cd6;opacity:.55"></div>
<div class="a" style="left:1130.0px;top:157.7px;width:9.5px;height:1.2px;background:#dcdcaa;opacity:.55"></div>
<div class="a" style="left:1139.4px;top:157.7px;width:2.1px;height:1.2px;background:#ffd700;opacity:.55"></div>
<div class="a" style="left:1142.5px;top:157.7px;width:1.1px;height:1.2px;background:#ffd700;opacity:.55"></div>
<div class="a" style="left:1116.3px;top:159.4px;width:5.2px;height:1.2px;background:#569cd6;opacity:.55"></div>
<div class="a" style="left:1122.6px;top:159.4px;width:15.8px;height:1.2px;background:#4fc1ff;opacity:.55"></div>
<div class="a" style="left:1141.5px;top:159.4px;width:10.5px;height:1.2px;background:#dcdcaa;opacity:.55"></div>
<div class="a" style="left:1152.0px;top:159.4px;width:1.1px;height:1.2px;background:#da70d6;opacity:.55"></div>
<div class="a" style="left:1153.0px;top:159.4px;width:9.5px;height:1.2px;background:#9cdcfe;opacity:.55"></div>
<div class="a" style="left:1164.6px;top:159.4px;width:7.4px;height:1.2px;background:#ce9178;opacity:.55"></div>
<div class="a" style="left:1171.9px;top:159.4px;width:1.1px;height:1.2px;background:#da70d6;opacity:.55"></div>
<div class="a" style="left:1114.2px;top:162.8px;width:1.1px;height:1.2px;background:#ffd700;opacity:.55"></div>
<div class="a" style="left:1112.1px;top:164.5px;width:1.1px;height:1.2px;background:#179fff;opacity:.55"></div>
<div class="a" style="left:1115.2px;top:164.5px;width:2.1px;height:1.2px;background:#179fff;opacity:.55"></div>
<div class="a" style="left:1117.3px;top:164.5px;width:1.1px;height:1.2px;background:#da70d6;opacity:.55"></div>
<div class="a" style="left:1112.1px;top:167.9px;width:6.3px;height:1.2px;background:#c586c0;opacity:.55"></div>
<div class="a" style="left:1119.4px;top:167.9px;width:1.1px;height:1.2px;background:#da70d6;opacity:.55"></div>
<div class="a" style="left:1114.2px;top:169.6px;width:2.1px;height:1.2px;background:#808080;opacity:.55"></div>
<div class="a" style="left:1116.3px;top:171.3px;width:1.1px;height:1.2px;background:#808080;opacity:.55"></div>
<div class="a" style="left:1117.3px;top:171.3px;width:4.2px;height:1.2px;background:#4ec9b0;opacity:.55"></div>
<div class="a" style="left:1122.6px;top:171.3px;width:5.2px;height:1.2px;background:#9cdcfe;opacity:.55"></div>
<div class="a" style="left:1128.9px;top:171.3px;width:10.5px;height:1.2px;background:#ce9178;opacity:.55"></div>
<div class="a" style="left:1140.4px;top:171.3px;width:2.1px;height:1.2px;background:#808080;opacity:.55"></div>
<div class="a" style="left:1116.3px;top:173.0px;width:1.1px;height:1.2px;background:#808080;opacity:.55"></div>
<div class="a" style="left:1117.3px;top:173.0px;width:3.2px;height:1.2px;background:#569cd6;opacity:.55"></div>
<div class="a" style="left:1121.5px;top:173.0px;width:9.5px;height:1.2px;background:#9cdcfe;opacity:.55"></div>
<div class="a" style="left:1132.0px;top:173.0px;width:19.9px;height:1.2px;background:#ce9178;opacity:.55"></div>
<div class="a" style="left:1152.0px;top:173.0px;width:1.1px;height:1.2px;background:#808080;opacity:.55"></div>
<div class="a" style="left:1116.3px;top:176.4px;width:2.1px;height:1.2px;background:#808080;opacity:.55"></div>
<div class="a" style="left:1118.4px;top:176.4px;width:3.2px;height:1.2px;background:#569cd6;opacity:.55"></div>
<div class="a" style="left:1121.5px;top:176.4px;width:1.1px;height:1.2px;background:#808080;opacity:.55"></div>
<div class="a" style="left:1114.2px;top:178.1px;width:3.2px;height:1.2px;background:#808080;opacity:.55"></div>
<div class="a" style="left:1112.1px;top:179.8px;width:1.1px;height:1.2px;background:#da70d6;opacity:.55"></div>
<div class="a" style="left:1110.0px;top:181.5px;width:1.1px;height:1.2px;background:#ffd700;opacity:.55"></div>
<div class="a" style="left:1110.0px;top:184.9px;width:6.3px;height:1.2px;background:#c586c0;opacity:.55"></div>
<div class="a" style="left:1117.3px;top:184.9px;width:7.4px;height:1.2px;background:#c586c0;opacity:.55"></div>
<div class="a" style="left:1125.7px;top:184.9px;width:5.2px;height:1.2px;background:#dcdcaa;opacity:.55"></div>
<div class="a" style="left:1109px;top:161.5px;width:85px;height:1.6px;background:#1f3a55"></div>
<div class="a" style="left:1106.5px;top:131.5px;width:2px;height:14.5px;background:#6a9a2a"></div>
<div class="a" style="left:1107px;top:151px;width:1.5px;height:10px;background:#1b81a8"></div>
<div class="a" style="left:1194px;top:122px;width:10px;height:506px;background:#1e1e1e;border-left:1px solid #2a2a2a"></div>
<div class="a" style="left:1194px;top:165px;width:10px;height:211px;background:#464646"></div>
<div class="a" style="left:1194px;top:167px;width:5px;height:63px;background:#4f7330"></div>
<div class="a" style="left:1194px;top:252px;width:5px;height:72px;background:#2a6a82"></div>
<div class="a" style="left:1194px;top:363px;width:5px;height:13.5px;background:#2a6a82"></div>
<div class="a" style="left:1194px;top:299.5px;width:10px;height:1.5px;background:#bbb"></div>
<div class="a" style="left:780.5px;top:123px;width:325.5px;height:199px;background:#306f61"></div>
<div class="a" style="left:785px;top:127px;width:317px;height:22px;background:#1b1b1b"></div>
<div class="a" style="left:785px;top:153px;width:317px;height:156px;background:#1b1b1b"></div>
<div class="a" style="left:791px;top:131px;width:14px;height:14px;border-radius:7px;background:#306f61"></div>
<div class="a" style="left:809px;top:131px;width:14px;height:14px;border-radius:7px;background:#306f61"></div>
<div class="a" style="left:827px;top:131px;width:14px;height:14px;border-radius:7px;background:#306f61"></div>
<div class="a" style="left:852px;top:127px;font-size:16.8px;line-height:22px;color:#f0f0f0;white-space:nowrap">/lib/firebase.ts</div>
<svg class="a" style="left:1045px;top:126px" width="60" height="26" viewBox="0 0 60 26" fill="none" stroke="#306f61" stroke-width="4" stroke-linecap="round" stroke-linejoin="round">
<path d="M13 6.5 l-5.5 6.5 l5.5 6.5"/><path d="M25 6.5 l5.5 6.5 l-5.5 6.5"/><path d="M39 5 l15 16 M54 5 l-15 16"/>
</svg>
<div class="a" style="left:796px;top:162px;width:309px;height:124px;background:#1d1d1d"></div>
<div class="a mono" style="left:804.3px;top:169.50px;font-size:8.1px;line-height:12.18px;white-space:pre;color:#d4d4d4"><span class="k">export</span><span class="p"> </span><span class="s">const</span><span class="p"> </span><span class="f">useFirestore</span><span class="p"> = </span><span class="b1">()</span><span class="p"> </span><span class="s">=&gt;</span><span class="p"> </span><span class="b1">{</span></div>
<div class="a mono" style="left:804.3px;top:181.68px;font-size:8.1px;line-height:12.18px;white-space:pre;color:#d4d4d4"><span class="p">  </span><span class="k">if</span><span class="p"> </span><span class="b2">(</span><span class="p">!</span><span class="v">firestore</span><span class="b2">)</span><span class="p"> </span><span class="b2">{</span></div>
<div class="a mono" style="left:804.3px;top:193.86px;font-size:8.1px;line-height:12.18px;white-space:pre;color:#d4d4d4"><span class="p">    </span><span class="v">firestore</span><span class="p"> = </span><span class="f">getFirestore</span><span class="b3">()</span><span class="p">;</span></div>
<div class="a mono" style="left:804.3px;top:206.04px;font-size:8.1px;line-height:12.18px;white-space:pre;color:#d4d4d4"><span class="p">    </span><span class="k">if</span><span class="p"> </span><span class="b3">(</span><span class="f">useEmulator</span><span class="b1">()</span><span class="b3">)</span><span class="p"> </span><span class="b3">{</span></div>
<div class="a mono" style="left:804.3px;top:218.22px;font-size:8.1px;line-height:12.18px;white-space:pre;color:#d4d4d4"><span class="p">      </span><span class="f">connectFirestoreEmulator</span><span class="b1">(</span><span class="v">firestore</span><span class="p">, </span><span class="str">&#x27;localhost&#x27;</span><span class="p">, </span><span class="n">8080</span><span class="b1">)</span><span class="p">;</span></div>
<div class="a mono" style="left:804.3px;top:230.40px;font-size:8.1px;line-height:12.18px;white-space:pre;color:#d4d4d4"><span class="p">    </span><span class="b3">}</span></div>
<div class="a mono" style="left:804.3px;top:242.58px;font-size:8.1px;line-height:12.18px;white-space:pre;color:#d4d4d4"><span class="p">  </span><span class="b2">}</span></div>
<div class="a mono" style="left:804.3px;top:254.76px;font-size:8.1px;line-height:12.18px;white-space:pre;color:#d4d4d4"><span class="p">  </span><span class="k">return</span><span class="p"> </span><span class="v">firestore</span><span class="p">;</span></div>
<div class="a mono" style="left:804.3px;top:266.94px;font-size:8.1px;line-height:12.18px;white-space:pre;color:#d4d4d4"><span class="b1">}</span><span class="p">;</span></div>
<div class="a" style="left:804.5px;top:182px;width:1px;height:85px;background:#404040"></div>
<div class="a" style="left:916px;top:206.5px;width:6px;height:11px;border:1px solid #888"></div>
<div class="a" style="left:814.3px;top:194px;width:1px;height:48px;background:#404040"></div>
<div class="a" style="left:824px;top:218.5px;width:1px;height:12px;background:#707070"></div>
<div class="a" style="left:796px;top:231px;width:309px;height:12.5px;border-top:1px solid #2c2c2c;border-bottom:1px solid #2c2c2c"></div>
<div class="a" style="left:823.5px;top:231.5px;width:6px;height:11px;border:1px solid #888"></div>
<div class="a" style="left:780.5px;top:309px;width:325.5px;height:13px;background:#306f61"></div>
<div class="a" style="left:1102px;top:123px;width:4px;height:199px;background:#306f61"></div>
<div class="a" style="left:900px;top:440px;width:173px;height:124px;background:#f1f3f4;overflow:hidden"><div class="a" style="left:18px;top:6.5px;width:160px;height:130px;background:#fff;border:1px solid #dadce0;border-radius:4px 0 0 0"></div><div class="a" style="left:19px;top:7.5px;width:155px;height:52px;background:#f8f9fa;border-radius:4px 0 0 0"></div><div class="a" style="left:18px;top:37px;width:155px;height:1px;background:#e0e0e0"></div><div class="a" style="left:18px;top:59.5px;width:155px;height:1px;background:#e0e0e0"></div><svg class="a" style="left:27px;top:15px" width="12" height="11" viewBox="0 0 12 11"><path d="M6 0.5 l5.5 5 h-1.7 v5 h-2.6 v-3.2 h-2.4 v3.2 h-2.6 v-5 h-1.7z" fill="#5f6368"/></svg><svg class="a" style="left:45px;top:17px" width="8" height="10" viewBox="0 0 8 10"><path d="M2.8 2.8 l2.4 2.4 l-2.4 2.4" fill="none" stroke="#5f6368" stroke-width="1.1"/></svg><div class="a" style="left:57px;top:16.5px;font-size:7.8px;line-height:12px;color:#5f6368;white-space:nowrap">tools</div><svg class="a" style="left:79px;top:17px" width="8" height="10" viewBox="0 0 8 10"><path d="M2.8 2.8 l2.4 2.4 l-2.4 2.4" fill="none" stroke="#5f6368" stroke-width="1.1"/></svg><div class="a" style="left:91px;top:16.5px;font-size:7.8px;line-height:12px;color:#5f6368;white-space:nowrap">O6BuubfulvPMh.</div><svg class="a" style="left:28px;top:43px" width="10" height="11" viewBox="0 0 10 11"><path d="M1 3.5 l4 -2.5 l4 2.5 M1 6 l4 -2.5 l4 2.5 M2.5 8 l2.5 -1.5 l2.5 1.5" fill="none" stroke="#5f6368" stroke-width="1.3"/></svg><div class="a" style="left:43px;top:43px;font-size:7.8px;line-height:12px;color:#6f7378;white-space:nowrap">react-crud-b5f55</div><svg class="a" style="left:29px;top:67px" width="10" height="10" viewBox="0 0 10 10"><path d="M5 1 v8 M1 5 h8" stroke="#1a73e8" stroke-width="1.6"/></svg><div class="a" style="left:43px;top:66px;font-size:7.8px;line-height:12px;color:#1a73e8;font-weight:bold;white-space:nowrap">Start collection</div><div class="a" style="left:18px;top:83px;width:155px;height:16px;background:#e8e8e8"></div><div class="a" style="left:13px;top:83px;width:86px;height:25px;background:rgba(240,240,70,0.8)"></div><div class="a mono" style="left:43px;top:85px;font-size:7.5px;line-height:12px;color:#777">tools</div></div>
<svg class="a" style="left:0;top:0" width="1280" height="720" viewBox="0 0 1280 720" fill="none" stroke="#fff" stroke-linecap="round" stroke-linejoin="round">
<path d="M762.5 196 C750 206 735 211 719 202 C706 194 698 181 693 166" stroke-width="2.7"/>
<path d="M691 177 Q691 168 693 164 Q700 164 707 168" stroke-width="2.6"/>
<path d="M744 527 Q764 500 765 456" stroke-width="3.6"/>
<path d="M758 469 Q762 460 766 455 Q770 461 773 470" stroke-width="3.6"/>
<path d="M880 518 Q850 490 840 456" stroke-width="3.6"/>
<path d="M837 471 Q837 460 840 454 Q846 459 851 465" stroke-width="3.6"/>
</svg>
<svg class="a" style="left:0;top:0" width="1280" height="720" viewBox="0 0 1280 720" fill="none" stroke="#fff" stroke-width="2.1" stroke-linecap="round" stroke-linejoin="round"><g transform="translate(653.80,547.60) scale(1.0734,1)"><path transform="translate(0.00,0)" d="M0.9 -8 L0.9 0 M0.9 -4.6 C1.6 -7.6 3.6 -8.3 5.1 -7.6" vector-effect="non-scaling-stroke"/><path transform="translate(5.40,0)" d="M0.8 -4.1 L6.1 -4.3 C6.1 -8.2 1 -8.6 0.7 -4 C0.4 0 4.6 0.6 6.1 -1.6" vector-effect="non-scaling-stroke"/><path transform="translate(12.40,0)" d="M5.4 -11 C3.6 -12.2 2.6 -10.6 2.6 -8 L2.6 3 M0.4 -7.6 L5.1 -7.9" vector-effect="non-scaling-stroke"/><path transform="translate(18.00,0)" d="M0.8 -4.1 L6.1 -4.3 C6.1 -8.2 1 -8.6 0.7 -4 C0.4 0 4.6 0.6 6.1 -1.6" vector-effect="non-scaling-stroke"/><path transform="translate(25.00,0)" d="M0.9 -8 L0.9 0 M0.9 -4.6 C1.6 -7.6 3.6 -8.3 5.1 -7.6" vector-effect="non-scaling-stroke"/><path transform="translate(30.40,0)" d="M0.8 -4.1 L6.1 -4.3 C6.1 -8.2 1 -8.6 0.7 -4 C0.4 0 4.6 0.6 6.1 -1.6" vector-effect="non-scaling-stroke"/><path transform="translate(37.40,0)" d="M0.9 -8 L0.9 0 M0.9 -5.6 C1.6 -8.6 5.9 -8.6 5.9 -5.6 L5.9 0" vector-effect="non-scaling-stroke"/><path transform="translate(44.60,0)" d="M5.6 -6.6 C4.6 -8.6 0.6 -8.1 0.6 -4 C0.6 0 4.6 0.5 5.9 -1.6" vector-effect="non-scaling-stroke"/><path transform="translate(51.10,0)" d="M0.8 -4.1 L6.1 -4.3 C6.1 -8.2 1 -8.6 0.7 -4 C0.4 0 4.6 0.6 6.1 -1.6" vector-effect="non-scaling-stroke"/><path transform="translate(62.70,0)" d="M2.6 -10.6 L2.6 -1 C2.6 0.2 3.8 0.2 4.8 -0.4 M0.2 -7.6 L5.6 -7.9" vector-effect="non-scaling-stroke"/><path transform="translate(68.30,0)" d="M0.5 -4 A3 4 0 1 0 6.5 -4 A3 4 0 1 0 0.5 -4" vector-effect="non-scaling-stroke"/><path transform="translate(80.20,0)" d="M2.6 -10.6 L2.6 -1 C2.6 0.2 3.8 0.2 4.8 -0.4 M0.2 -7.6 L5.6 -7.9" vector-effect="non-scaling-stroke"/><path transform="translate(85.80,0)" d="M0.9 -11.5 L0.9 0 M0.9 -5 C2.1 -8.6 6.1 -8.6 6.1 -5 L6.1 0" vector-effect="non-scaling-stroke"/><path transform="translate(93.10,0)" d="M0.8 -4.1 L6.1 -4.3 C6.1 -8.2 1 -8.6 0.7 -4 C0.4 0 4.6 0.6 6.1 -1.6" vector-effect="non-scaling-stroke"/><path transform="translate(104.70,0)" d="M5.4 -11 C3.6 -12.2 2.6 -10.6 2.6 -8 L2.6 3 M0.4 -7.6 L5.1 -7.9" vector-effect="non-scaling-stroke"/><path transform="translate(110.30,0)" d="M1.1 -7.6 L1.1 0 M1.1 -10.6 L1.1 -10.3" vector-effect="non-scaling-stroke"/><path transform="translate(113.30,0)" d="M0.9 -8 L0.9 0 M0.9 -4.6 C1.6 -7.6 3.6 -8.3 5.1 -7.6" vector-effect="non-scaling-stroke"/><path transform="translate(118.70,0)" d="M0.8 -4.1 L6.1 -4.3 C6.1 -8.2 1 -8.6 0.7 -4 C0.4 0 4.6 0.6 6.1 -1.6" vector-effect="non-scaling-stroke"/><path transform="translate(125.70,0)" d="M5.1 -7 C4.1 -8.6 0.9 -8.4 0.9 -6 C0.9 -4 5.3 -4.6 5.3 -2 C5.3 0.3 1.6 0.6 0.6 -1" vector-effect="non-scaling-stroke"/><path transform="translate(131.80,0)" d="M2.6 -10.6 L2.6 -1 C2.6 0.2 3.8 0.2 4.8 -0.4 M0.2 -7.6 L5.6 -7.9" vector-effect="non-scaling-stroke"/><path transform="translate(137.40,0)" d="M0.5 -4 A3 4 0 1 0 6.5 -4 A3 4 0 1 0 0.5 -4" vector-effect="non-scaling-stroke"/><path transform="translate(144.70,0)" d="M0.9 -8 L0.9 0 M0.9 -4.6 C1.6 -7.6 3.6 -8.3 5.1 -7.6" vector-effect="non-scaling-stroke"/><path transform="translate(150.10,0)" d="M0.8 -4.1 L6.1 -4.3 C6.1 -8.2 1 -8.6 0.7 -4 C0.4 0 4.6 0.6 6.1 -1.6" vector-effect="non-scaling-stroke"/></g><g transform="translate(681.40,569.50) scale(1.1339,1)"><path transform="translate(0.00,0)" d="M5.6 -11.5 L5.6 0 M5.6 -4.5 C5.1 -8.5 0.6 -8.5 0.6 -4 C0.6 0.4 5.1 0.5 5.6 -2" vector-effect="non-scaling-stroke"/><path transform="translate(7.00,0)" d="M5.6 -6.3 C4.6 -8.3 0.7 -8.2 0.6 -4 C0.5 -0.2 4.2 0.4 5.6 -2.6 M5.7 -7.8 L5.7 0" vector-effect="non-scaling-stroke"/><path transform="translate(14.00,0)" d="M2.6 -10.6 L2.6 -1 C2.6 0.2 3.8 0.2 4.8 -0.4 M0.2 -7.6 L5.6 -7.9" vector-effect="non-scaling-stroke"/><path transform="translate(19.60,0)" d="M5.6 -6.3 C4.6 -8.3 0.7 -8.2 0.6 -4 C0.5 -0.2 4.2 0.4 5.6 -2.6 M5.7 -7.8 L5.7 0" vector-effect="non-scaling-stroke"/><path transform="translate(26.60,0)" d="M0.9 -11.5 L0.9 0 M0.9 -4.2 C1.6 -8.4 6.1 -8.4 6.1 -4 C6.1 0.4 1.6 0.5 0.9 -1.6" vector-effect="non-scaling-stroke"/><path transform="translate(33.60,0)" d="M5.6 -6.3 C4.6 -8.3 0.7 -8.2 0.6 -4 C0.5 -0.2 4.2 0.4 5.6 -2.6 M5.7 -7.8 L5.7 0" vector-effect="non-scaling-stroke"/><path transform="translate(40.60,0)" d="M5.1 -7 C4.1 -8.6 0.9 -8.4 0.9 -6 C0.9 -4 5.3 -4.6 5.3 -2 C5.3 0.3 1.6 0.6 0.6 -1" vector-effect="non-scaling-stroke"/><path transform="translate(46.70,0)" d="M0.8 -4.1 L6.1 -4.3 C6.1 -8.2 1 -8.6 0.7 -4 C0.4 0 4.6 0.6 6.1 -1.6" vector-effect="non-scaling-stroke"/><path transform="translate(58.30,0)" d="M5.1 -7 C4.1 -8.6 0.9 -8.4 0.9 -6 C0.9 -4 5.3 -4.6 5.3 -2 C5.3 0.3 1.6 0.6 0.6 -1" vector-effect="non-scaling-stroke"/><path transform="translate(64.40,0)" d="M0.8 -4.1 L6.1 -4.3 C6.1 -8.2 1 -8.6 0.7 -4 C0.4 0 4.6 0.6 6.1 -1.6" vector-effect="non-scaling-stroke"/><path transform="translate(71.40,0)" d="M0.9 -8 L0.9 0 M0.9 -4.6 C1.6 -7.6 3.6 -8.3 5.1 -7.6" vector-effect="non-scaling-stroke"/><path transform="translate(76.80,0)" d="M0.4 -8 L3.1 0 L5.9 -8" vector-effect="non-scaling-stroke"/><path transform="translate(83.20,0)" d="M1.1 -7.6 L1.1 0 M1.1 -10.6 L1.1 -10.3" vector-effect="non-scaling-stroke"/><path transform="translate(86.20,0)" d="M5.6 -6.6 C4.6 -8.6 0.6 -8.1 0.6 -4 C0.6 0 4.6 0.5 5.9 -1.6" vector-effect="non-scaling-stroke"/><path transform="translate(92.70,0)" d="M0.8 -4.1 L6.1 -4.3 C6.1 -8.2 1 -8.6 0.7 -4 C0.4 0 4.6 0.6 6.1 -1.6" vector-effect="non-scaling-stroke"/></g><g transform="translate(946.30,589.00) scale(1.1529,1)"><path transform="translate(0.00,0)" d="M0.9 -8 L0.9 0 M0.9 -5.6 C1.6 -8.6 5.9 -8.6 5.9 -5.6 L5.9 0" vector-effect="non-scaling-stroke"/><path transform="translate(7.20,0)" d="M5.6 -6.3 C4.6 -8.3 0.7 -8.2 0.6 -4 C0.5 -0.2 4.2 0.4 5.6 -2.6 M5.7 -7.8 L5.7 0" vector-effect="non-scaling-stroke"/><path transform="translate(14.20,0)" d="M0.9 -8 L0.9 0 M0.9 -5.6 C1.6 -8.6 4.6 -8.6 4.6 -5.6 L4.6 0 M4.6 -5.6 C5.1 -8.6 8.6 -8.6 8.6 -5.6 L8.6 0" vector-effect="non-scaling-stroke"/><path transform="translate(24.00,0)" d="M0.8 -4.1 L6.1 -4.3 C6.1 -8.2 1 -8.6 0.7 -4 C0.4 0 4.6 0.6 6.1 -1.6" vector-effect="non-scaling-stroke"/><path transform="translate(35.60,0)" d="M0.5 -4 A3 4 0 1 0 6.5 -4 A3 4 0 1 0 0.5 -4" vector-effect="non-scaling-stroke"/><path transform="translate(42.90,0)" d="M5.4 -11 C3.6 -12.2 2.6 -10.6 2.6 -8 L2.6 3 M0.4 -7.6 L5.1 -7.9" vector-effect="non-scaling-stroke"/><path transform="translate(53.10,0)" d="M2.6 -10.6 L2.6 -1 C2.6 0.2 3.8 0.2 4.8 -0.4 M0.2 -7.6 L5.6 -7.9" vector-effect="non-scaling-stroke"/><path transform="translate(58.70,0)" d="M0.9 -11.5 L0.9 0 M0.9 -5 C2.1 -8.6 6.1 -8.6 6.1 -5 L6.1 0" vector-effect="non-scaling-stroke"/><path transform="translate(66.00,0)" d="M0.8 -4.1 L6.1 -4.3 C6.1 -8.2 1 -8.6 0.7 -4 C0.4 0 4.6 0.6 6.1 -1.6" vector-effect="non-scaling-stroke"/></g><g transform="translate(956.00,612.00) scale(1.1250,1)"><path transform="translate(0.00,0)" d="M5.6 -6.6 C4.6 -8.6 0.6 -8.1 0.6 -4 C0.6 0 4.6 0.5 5.9 -1.6" vector-effect="non-scaling-stroke"/><path transform="translate(6.50,0)" d="M0.5 -4 A3 4 0 1 0 6.5 -4 A3 4 0 1 0 0.5 -4" vector-effect="non-scaling-stroke"/><path transform="translate(13.80,0)" d="M1.1 -11.5 L1.1 0" vector-effect="non-scaling-stroke"/><path transform="translate(16.80,0)" d="M1.1 -11.5 L1.1 0" vector-effect="non-scaling-stroke"/><path transform="translate(19.80,0)" d="M0.8 -4.1 L6.1 -4.3 C6.1 -8.2 1 -8.6 0.7 -4 C0.4 0 4.6 0.6 6.1 -1.6" vector-effect="non-scaling-stroke"/><path transform="translate(26.80,0)" d="M5.6 -6.6 C4.6 -8.6 0.6 -8.1 0.6 -4 C0.6 0 4.6 0.5 5.9 -1.6" vector-effect="non-scaling-stroke"/><path transform="translate(33.30,0)" d="M2.6 -10.6 L2.6 -1 C2.6 0.2 3.8 0.2 4.8 -0.4 M0.2 -7.6 L5.6 -7.9" vector-effect="non-scaling-stroke"/><path transform="translate(38.90,0)" d="M1.1 -7.6 L1.1 0 M1.1 -10.6 L1.1 -10.3" vector-effect="non-scaling-stroke"/><path transform="translate(41.90,0)" d="M0.5 -4 A3 4 0 1 0 6.5 -4 A3 4 0 1 0 0.5 -4" vector-effect="non-scaling-stroke"/><path transform="translate(49.20,0)" d="M0.9 -8 L0.9 0 M0.9 -5.6 C1.6 -8.6 5.9 -8.6 5.9 -5.6 L5.9 0" vector-effect="non-scaling-stroke"/></g></svg>
<div class="a" style="left:118px;top:628px;width:1086px;height:20px;background:#007acc"></div>
<svg class="a" style="left:0;top:0" width="1280" height="720" viewBox="0 0 1280 720" fill="none" stroke="#fff" stroke-width="1.2">
<circle cx="136.9" cy="634.6" r="2.1"/><circle cx="136.9" cy="644.7" r="2.1"/><circle cx="143.5" cy="637.5" r="2.1"/>
<path d="M136.9 636.7 v5.9 M143 639.5 q-0.5 2.8 -4.5 3.3 l-1.6 0.5"/>
<path d="M203.6 639.6 a5.2 5.2 0 0 1 9.6 -2.6 M213.8 640.8 a5.2 5.2 0 0 1 -9.6 2.6 M213.6 634.2 v3.3 h-3.3 M203.8 646.3 v-3.3 h3.3"/>
<circle cx="239.7" cy="640.5" r="6"/><path d="M237.2 638 l5 5 M242.2 638 l-5 5"/>
<path d="M269.1 634.2 l6.4 12 h-12.8z M269.1 638.5 v4 M269.1 643.8 v0.9"/>
</svg>
<div class="sb" style="top:630px;left:151px">main*</div>
<div class="sb" style="top:630px;left:250.5px">0</div>
<div class="sb" style="top:630px;left:279.7px">0</div>
<div class="sb" style="top:630px;left:688px;font-size:12.7px">Ln 24, Col 7</div>
<div class="sb" style="top:630px;left:775px;font-size:12.7px">Spaces: 2</div>
<div class="sb" style="top:630px;left:849px;font-size:12.7px">UTF-8</div>
<div class="sb" style="top:630px;left:903px;font-size:12.7px">LF</div>
<div class="sb" style="top:630px;left:953px;font-size:12.7px">TypeScript React</div>
<div class="sb" style="top:630px;left:1088px;font-size:12.7px">Prettier</div>
<svg class="a" style="left:0;top:0" width="1280" height="720" viewBox="0 0 1280 720" fill="none" stroke="#fff" stroke-width="1.1">
<path d="M937.5 634 q-2 0 -2 2 v1.5 q0 1.5 -1.5 2 q1.5 0.5 1.5 2 v1.5 q0 2 2 2 M942 634 q2 0 2 2 v1"/><circle cx="944" cy="643.5" r="2"/>
<path d="M1070 640.5 l2.5 3.5 l5.5 -8.5 M1075 644 l6 -8.5"/>
<rect x="1154" y="633.5" width="7.5" height="5.5" rx="0.8"/><path d="M1155.5 639 l-1 2"/><circle cx="1152.5" cy="640" r="2.3"/><path d="M1148.5 646.5 q0 -4 4 -4 q4 0 4 4"/>
<path d="M1181.5 644.5 h10 q-1.5 -1.8 -1.5 -4.5 q0 -4.5 -3.5 -5 q-3.5 0.5 -3.5 5 q0 2.7 -1.5 4.5z M1185 646.3 h3"/>
</svg>
<div class="a" style="left:1186px;top:632px;width:6px;height:6px;border-radius:3px;background:#fff"></div>
</body></html>
